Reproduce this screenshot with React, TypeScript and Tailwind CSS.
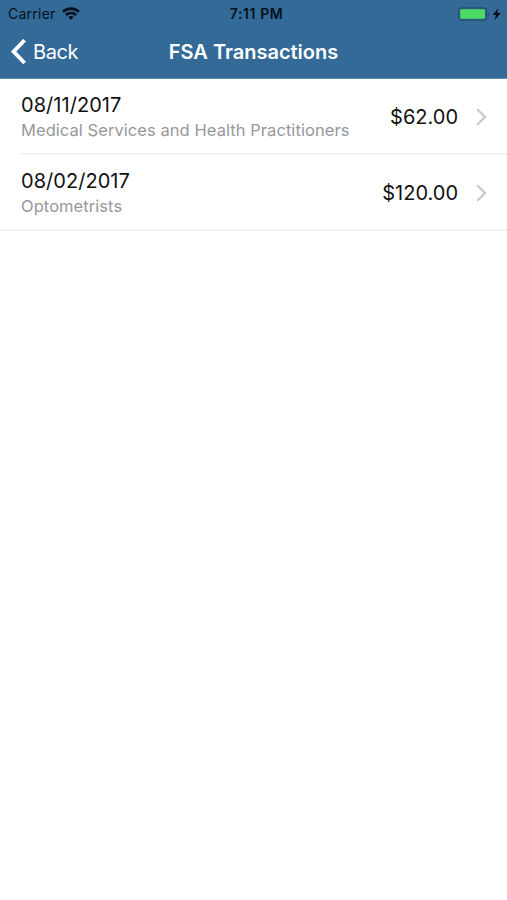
import { clsx } from 'clsx';

interface Transaction {
  date: string;
  category: string;
  amount: string;
}

const transactions: Transaction[] = [
  { date: '08/11/2017', category: 'Medical Services and Health Practitioners', amount: '$62.00' },
  { date: '08/02/2017', category: 'Optometrists', amount: '$120.00' },
];

function WifiIcon() {
  return (
    <svg className="w-[18px] h-[13px]" viewBox="0 0 18 13" fill="none" stroke="#05101a" strokeWidth="2.6">
      <path d="M1 4.8C5.4.6 12.6.6 17 4.8" />
      <path d="M3.9 8c2.8-2.6 7.4-2.6 10.2 0" />
      <path d="M6.2 10c1.6-1.3 4-1.3 5.6 0L9 12.8z" fill="#05101a" stroke="none" />
    </svg>
  );
}

function BatteryIcon() {
  return (
    <svg className="w-[44px] h-[14px]" viewBox="0 0 44 14" fill="none">
      <rect x="0.9" y="0.9" width="27.4" height="12.2" rx="2.6" stroke="#24506f" strokeWidth="1.2" />
      <rect x="2.2" y="2.2" width="24.8" height="9.6" rx="1" fill="#4cd964" />
      <path d="M29.8 5c1.5.5 1.5 3.5 0 4z" fill="#1d4360" />
      <path d="M40.4 1.2L34.6 8h3.4l-1.3 5.2L42.8 6h-3.5z" fill="#05101a" />
    </svg>
  );
}

function StatusBar() {
  return (
    <div className="grid grid-cols-3 items-center h-[27px] pl-2 pr-[5px] text-[#05101a]">
      <div className="flex items-center gap-[6px]">
        <span className="text-[14px] tracking-[0.25px]">Carrier</span>
        <WifiIcon />
      </div>
      <span className="pl-[3px] text-center text-[14px] font-semibold tracking-[0.6px]">7:11 PM</span>
      <div className="flex justify-end">
        <BatteryIcon />
      </div>
    </div>
  );
}

function TransactionRow({ item, last }: { item: Transaction; last: boolean }) {
  return (
    <li className={clsx('border-b-2 border-[#f1f1f2]', last ? 'pl-[21px]' : 'ml-[21px]')}>
      <div className="flex items-center justify-between h-[74px] pt-[2px] pr-5">
        <div>
          <p className="text-[20px] leading-[25px] tracking-[0.04px] text-[#111]">{item.date}</p>
          <p className="text-[16.5px] leading-[24px] tracking-[0.06px] text-[#98989a]">{item.category}</p>
        </div>
        <div className="flex items-center gap-[18px]">
          <span className="text-[20px] text-[#111]">{item.amount}</span>
          <svg className="w-[11px] h-[18px] mb-px" viewBox="0 0 11 18" fill="none" stroke="#c7c7cc" strokeWidth="2.2">
            <path d="M1.2 1.2L9 9l-7.8 7.8" />
          </svg>
        </div>
      </div>
    </li>
  );
}

export default function App() {
  return (
    <div className="min-h-screen bg-white font-['Inter',sans-serif]">
      <header className="h-[79px] bg-[#336a98] border-b border-[#5f90b2]">
        <StatusBar />
        <div className="grid grid-cols-[1fr_auto_1fr] items-center h-[50px] px-[11px] text-white">
          <button className="flex items-center gap-[7px] text-[20px] tracking-[-0.4px]">
            <svg className="w-[15px] h-[26px]" viewBox="0 0 15 26" fill="none" stroke="#fff" strokeWidth="3.8">
              <path d="M13.6 1.2L2.6 12.6l11 11.4" />
            </svg>
            Back
          </button>
          <h1 className="text-[20px] font-semibold">FSA Transactions</h1>
        </div>
      </header>
      <ul>
        {transactions.map((item, index) => (
          <TransactionRow key={item.date} item={item} last={index === transactions.length - 1} />
        ))}
      </ul>
    </div>
  );
}
